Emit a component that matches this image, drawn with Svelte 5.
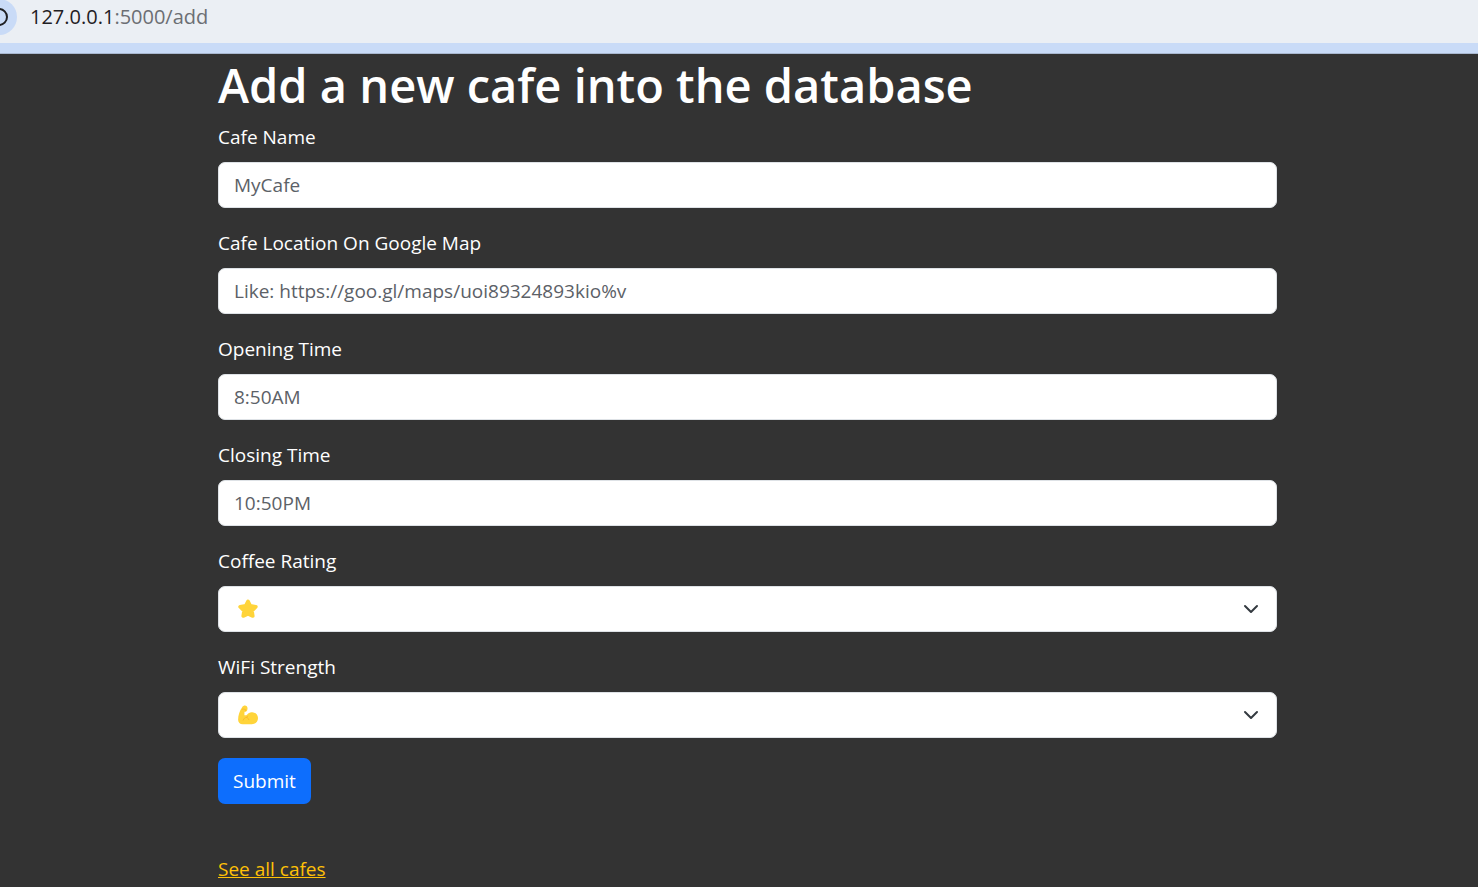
<script>
  const textFields = [
    { id: 'name', label: 'Cafe Name', hint: 'MyCafe' },
    { id: 'location', label: 'Cafe Location On Google Map', hint: 'Like: https://goo.gl/maps/uoi89324893kio%v' },
    { id: 'open', label: 'Opening Time', hint: '8:50AM' },
    { id: 'close', label: 'Closing Time', hint: '10:50PM' }
  ];
  const ratings = [
    { id: 'coffee', label: 'Coffee Rating', symbol: '⭐' },
    { id: 'wifi', label: 'WiFi Strength', symbol: '💪' }
  ];
</script>

<header class="address">
  <span class="site">
    <svg viewBox="0 0 36 36" aria-hidden="true">
      <circle cx="18" cy="18" r="18" fill="#c9dbf7" />
      <circle cx="18" cy="18" r="8" fill="none" stroke="#1f2023" stroke-width="2" />
    </svg>
  </span>
  <span class="url">127.0.0.1<span class="path">:5000/add</span></span>
</header>

<main>
  <h1>Add a new cafe into the database</h1>
  <form onsubmit={(e) => e.preventDefault()}>
    {#each textFields as field}
      <div class="field">
        <label for={field.id}>{field.label}</label>
        <input class="control" id={field.id} type="text" placeholder={field.hint} />
      </div>
    {/each}
    {#each ratings as rating}
      <div class="field">
        <label for={rating.id}>{rating.label}</label>
        <div class="picker">
          <select class="control" id={rating.id}>
            <option>{rating.symbol}</option>
          </select>
          {#if rating.id === 'coffee'}
            <svg class="symbol" viewBox="0 0 20 20" aria-hidden="true">
              <path d="M10 2.4 12.3 6.9 17.9 7.8 14 11.7 14.8 17 10 14.8 5.2 17 6 11.7 2.1 7.8 7.7 6.9Z" fill="#ffd43a" stroke="#ffd43a" stroke-width="3.6" stroke-linejoin="round" />
            </svg>
          {:else}
            <svg class="symbol" viewBox="0 0 20 20" aria-hidden="true">
              <path d="M4.3 2.1C5.1.8 6.4.3 7.7.7 9.3 1.1 9.8 2.8 9.4 4.4 9.1 5.8 8 6.9 6.5 6.7L6.4 10.2C7.5 10.4 8.3 10.4 9 9.7 10.2 7.9 12.1 7 14.2 7.2 17.5 7.4 20 9.9 20 13.1 20 16.8 17.6 19.2 13.8 19.2H4.8C1.9 19.2.1 17.4.1 14.7.1 10.8 1.5 5.7 4.3 2.1Z" fill="#ffd43a" />
              <path d="M4.2 4.2c1.1-.5 1.7.2 2.6.1.9-.1 1.1.8.6 1.5M5.2 15.1c.6-1.7 1.8-2.6 3.4-2.7 1.2.4 1.9 1.2 2.2 2.3M8.6 12.4c.5-.3.8-.7 1-1.2" fill="none" stroke="#f9b52a" stroke-width=".9" stroke-linecap="round" />
            </svg>
          {/if}
          <svg class="chevron" viewBox="0 0 16 16" aria-hidden="true">
            <path d="m2 5 6 6 6-6" fill="none" stroke="#343a40" stroke-width="2" stroke-linecap="round" stroke-linejoin="round" />
          </svg>
        </div>
      </div>
    {/each}
    <button type="submit">Submit</button>
  </form>
  <p><a href="/cafes">See all cafes</a></p>
</main>

<style>
  :global(body) {
    background: #333;
    color: #fff;
    font: 19px/30px "Open Sans", "Segoe UI", sans-serif;
    overflow: hidden;
  }
  .address {
    display: flex;
    align-items: flex-start;
    gap: 13px;
    height: 43px;
    overflow: hidden;
    background: #ebeff4;
    border-bottom: 10px solid #c9dbf7;
    box-shadow: 0 1px #a9b8d0;
    color: #1f2023;
    font-size: 20px;
    line-height: 34px;
  }
  .site {
    display: flex;
    justify-content: flex-end;
    width: 17px;
    height: 35px;
    overflow: hidden;
  }
  .site svg {
    flex: none;
    width: 36px;
    height: 36px;
    margin-top: -1px;
  }
  .path {
    color: #6b6e73;
  }
  main {
    padding: 4px 201px 0 218px;
  }
  h1 {
    margin: 0 0 8px;
    font-size: 47px;
    font-weight: 600;
    line-height: 57px;
  }
  .field {
    margin-bottom: 20px;
  }
  label {
    display: block;
    margin-bottom: 10px;
  }
  .control {
    display: block;
    box-sizing: border-box;
    width: 100%;
    height: 46px;
    padding: 0 15px;
    border: 1px solid #dee2e6;
    border-radius: 7px;
    background: #fff;
    color: #212529;
    font: inherit;
  }
  .control::placeholder {
    color: #5c6167;
    opacity: 1;
  }
  .picker {
    position: relative;
  }
  select.control {
    appearance: none;
    color: transparent;
  }
  .symbol,
  .chevron {
    position: absolute;
    top: 0;
    bottom: 0;
    margin: auto;
    pointer-events: none;
  }
  .symbol {
    left: 20px;
    width: 20px;
    height: 20px;
  }
  .chevron {
    right: 18px;
    width: 16px;
    height: 16px;
  }
  button {
    height: 46px;
    padding: 0 15px;
    border: 0;
    border-radius: 7px;
    background: #0d6efd;
    color: #fff;
    font: inherit;
  }
  p {
    margin: 50px 0 0;
  }
  a {
    color: #ffc107;
  }
</style>
